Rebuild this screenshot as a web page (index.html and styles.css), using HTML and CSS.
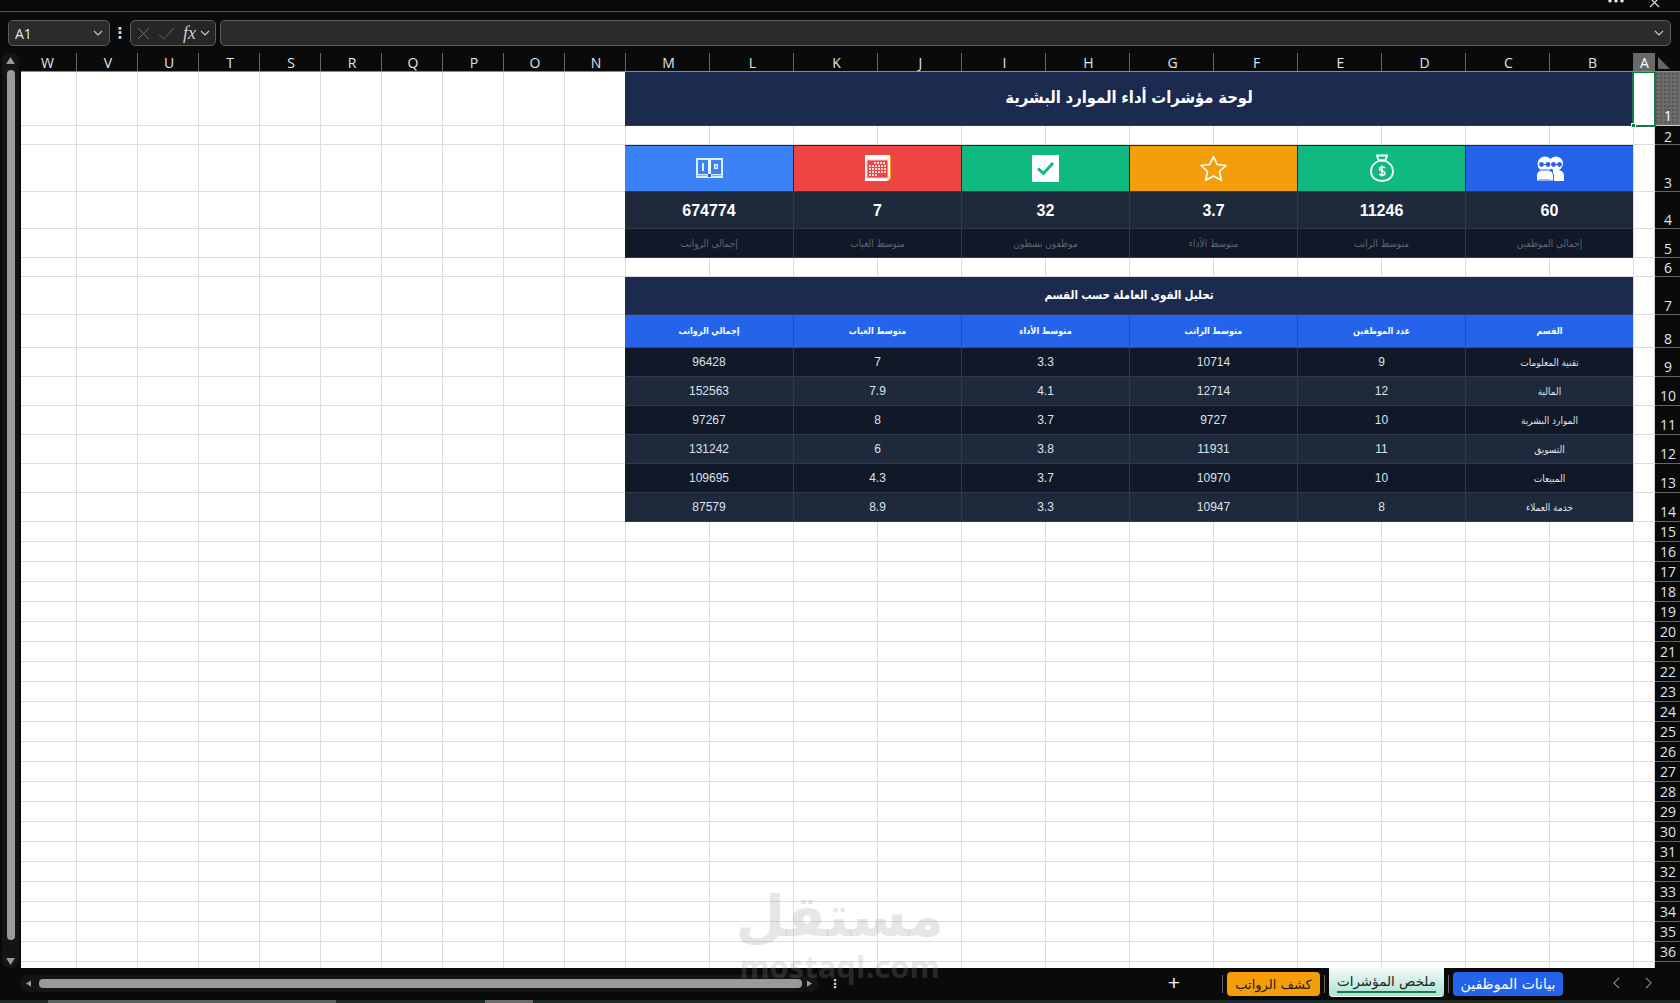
FILE: index.html
```html
<!DOCTYPE html>
<html lang="ar">
<head>
  <meta charset="UTF-8">
  <title>لوحة مؤشرات أداء الموارد البشرية</title>
  <link rel="stylesheet" href="styles.css">
</head>
<body>

  <div class="titlebar">
    <svg class="win-dots" viewBox="0 0 16 4"><circle cx="2" cy="1" r="1.6"/><circle cx="8" cy="1" r="1.6"/><circle cx="14" cy="1" r="1.6"/></svg>
    <svg class="win-close" viewBox="0 0 12 8"><path d="M1 -2L10 7M10 -2L1 7"/></svg>
  </div>

  <div class="formula-row">
    <div class="box name-box">
      <span>A1</span>
      <svg class="chev" viewBox="0 0 10 6"><path d="M1 1l4 4 4-4"/></svg>
    </div>
    <span class="vdots">⋮</span>
    <div class="box fx-box">
      <svg class="fx-x" viewBox="0 0 14 14"><path d="M1 1l12 12M13 1L1 13"/></svg>
      <svg class="fx-check" viewBox="0 0 18 14"><path d="M1 8l5 5L17 1"/></svg>
      <i class="fx-label">fx</i>
      <svg class="chev" viewBox="0 0 10 6"><path d="M1 1l4 4 4-4"/></svg>
    </div>
    <div class="box formula-input">
      <svg class="chev" viewBox="0 0 10 6"><path d="M1 1l4 4 4-4"/></svg>
    </div>
  </div>

  <div class="workarea">
    <div class="vscroll">
      <svg class="arrow" viewBox="0 0 10 8"><path d="M5 0l5 8H0z"/></svg>
      <div class="vthumb"></div>
      <svg class="arrow" viewBox="0 0 10 8"><path d="M0 0h10L5 8z"/></svg>
    </div>

    <div class="grid-wrap">
      <div class="col-head">
        <span class="c first">W</span><span class="c">V</span><span class="c">U</span><span class="c">T</span><span class="c">S</span><span class="c">R</span><span class="c">Q</span><span class="c">P</span><span class="c">O</span><span class="c">N</span>
        <span class="c wide">M</span><span class="c wide">L</span><span class="c wide">K</span><span class="c wide">J</span><span class="c wide">I</span><span class="c wide">H</span><span class="c wide">G</span><span class="c wide">F</span><span class="c wide">E</span><span class="c wide">D</span><span class="c wide">C</span><span class="c wide">B</span>
        <span class="c col-a">A</span>
        <span class="corner"><svg viewBox="0 0 12 12"><path d="M0 0l12 12H0z"/></svg></span>
      </div>

      <div class="sheet">
        <div class="row r1">
          <div class="cells main-title">لوحة مؤشرات أداء الموارد البشرية</div>
          <div class="a-cell active"><span class="handle"></span></div>
          <span class="rn selected">1</span>
        </div>
        <div class="row r2"><div class="cells"></div><div class="a-cell"></div><span class="rn">2</span></div>

        <div class="row r3">
          <div class="cells band icons" dir="rtl">
            <div class="cell blue">
              <svg class="ico" width="28" height="25" viewBox="0 0 28 25">
                <circle cx="20" cy="7.500" r="7" fill="#fff"/>
                <path fill="#fff" d="M17 14h5c3.500 0 6 2.500 6 6v5H17z"/>
                <circle cx="9" cy="8" r="7.500" fill="#fff"/>
                <path fill="#fff" stroke="#2563eb" d="M.5 25v-5c0-3.500 2.500-6 6-6h5c3.500 0 6 2.500 6 6v5z"/>
                <circle cx="5.500" cy="8.500" r="2.400" fill="#2563eb"/><circle cx="12" cy="8.500" r="2.400" fill="#2563eb"/>
                <circle cx="17.500" cy="8.500" r="2.400" fill="#2563eb"/><circle cx="23.500" cy="8.500" r="2.400" fill="#2563eb"/>
                <path stroke="#2563eb" d="M7 8.500h3.500M19 8.500h3"/>
                <path stroke="#9db9f2" d="M3 23.500h11"/>
              </svg>
            </div>
            <div class="cell green">
              <svg class="ico" width="24" height="28" viewBox="0 0 24 28" fill="none" stroke="#fff" stroke-width="1.800">
                <path d="M7 1.500h10l-1.500 5h-7z"/>
                <path d="M8 6.500h8"/>
                <path d="M8.500 7C4 9 1 13 1 17.500 1 23.500 6 27 12 27s11-3.500 11-9.500C23 13 20 9 15.500 7"/>
                <path stroke-width="1.500" d="M15 14c-.8-1.200-5.500-1.800-5.500.9 0 2.800 5.500 1.500 5.500 4.300 0 2.700-4.800 2.200-5.700.8M12 11.500v11"/>
              </svg>
            </div>
            <div class="cell amber">
              <svg class="ico" width="27" height="27" viewBox="0 0 27 27" fill="none" stroke="#fff" stroke-width="1.700" stroke-linejoin="round">
                <path d="M13.500 1.500l3.700 8 8.800 1-6.500 6 1.800 8.800-7.800-4.400-7.800 4.400 1.800-8.800-6.500-6 8.800-1z"/>
              </svg>
            </div>
            <div class="cell green">
              <svg class="ico" width="27" height="27" viewBox="0 0 27 27">
                <rect width="27" height="27" fill="#fff"/>
                <path fill="none" stroke="#10b981" stroke-width="3" d="M6 13.500l5.500 5L21 8"/>
              </svg>
            </div>
            <div class="cell red">
              <svg class="ico" width="26" height="26" viewBox="0 0 26 26">
                <path fill="#f59e0b" d="M2 1h24v23l-3 2H2z"/>
                <path fill="#fff" d="M0 0h25v23l-3 3H0z"/>
                <rect x="2" y="5" width="21" height="18" fill="#ef4444" stroke="#eac8dc"/>
                <g fill="none" stroke="#f9dcd4" stroke-width="2" stroke-dasharray="2 1">
                  <path d="M9 8h12"/>
                  <path d="M4 11h17"/>
                  <path d="M4 14h17"/>
                  <path d="M4 17h17"/>
                  <path d="M4 20h9"/>
                </g>
              </svg>
            </div>
            <div class="cell sky">
              <svg class="ico" width="27" height="20" viewBox="0 0 27 20">
                <rect width="27" height="20" fill="#d8f2fb"/>
                <rect x="2" y="2" width="10" height="14" fill="#3b82f6"/>
                <rect x="15" y="2" width="10" height="14" fill="#3b82f6"/>
                <rect x="12" y="2" width="3" height="14" fill="#eaf8fd"/>
                <rect x="12" y="16" width="3" height="3" fill="#2563eb"/>
                <rect x="6" y="5" width="2" height="8" fill="#e8f4ff"/>
                <rect x="18" y="6" width="4" height="5" fill="#e8f4ff"/>
                <rect x="19.500" y="7.500" width="1.500" height="2" fill="#3b82f6"/>
                <rect x="1" y="17" width="10" height="1" fill="#7fb2f0"/>
                <rect x="16" y="17" width="10" height="1" fill="#7fb2f0"/>
              </svg>
            </div>
          </div>
          <div class="a-cell"></div><span class="rn">3</span>
        </div>

        <div class="row r4">
          <div class="cells band values" dir="rtl">
            <div class="cell">60</div><div class="cell">11246</div><div class="cell">3.7</div><div class="cell">32</div><div class="cell">7</div><div class="cell">674774</div>
          </div>
          <div class="a-cell"></div><span class="rn">4</span>
        </div>

        <div class="row r5">
          <div class="cells band captions" dir="rtl">
            <div class="cell">إجمالي الموظفين</div><div class="cell">متوسط الراتب</div><div class="cell">متوسط الأداء</div><div class="cell">موظفون نشطون</div><div class="cell">متوسط الغياب</div><div class="cell">إجمالي الرواتب</div>
          </div>
          <div class="a-cell"></div><span class="rn">5</span>
        </div>

        <div class="row r6"><div class="cells"></div><div class="a-cell"></div><span class="rn">6</span></div>

        <div class="row r7">
          <div class="cells section-title">تحليل القوى العاملة حسب القسم</div>
          <div class="a-cell"></div><span class="rn">7</span>
        </div>

        <div class="row r8">
          <div class="cells band thead" dir="rtl">
            <div class="cell">القسم</div><div class="cell">عدد الموظفين</div><div class="cell">متوسط الراتب</div><div class="cell">متوسط الأداء</div><div class="cell">متوسط الغياب</div><div class="cell">إجمالي الرواتب</div>
          </div>
          <div class="a-cell"></div><span class="rn">8</span>
        </div>

        <div class="row rd">
          <div class="cells band tdata" dir="rtl">
            <div class="cell name">تقنية المعلومات</div><div class="cell">9</div><div class="cell">10714</div><div class="cell">3.3</div><div class="cell">7</div><div class="cell">96428</div>
          </div>
          <div class="a-cell"></div><span class="rn">9</span>
        </div>
        <div class="row rd">
          <div class="cells band tdata alt" dir="rtl">
            <div class="cell name">المالية</div><div class="cell">12</div><div class="cell">12714</div><div class="cell">4.1</div><div class="cell">7.9</div><div class="cell">152563</div>
          </div>
          <div class="a-cell"></div><span class="rn">10</span>
        </div>
        <div class="row rd">
          <div class="cells band tdata" dir="rtl">
            <div class="cell name">الموارد البشرية</div><div class="cell">10</div><div class="cell">9727</div><div class="cell">3.7</div><div class="cell">8</div><div class="cell">97267</div>
          </div>
          <div class="a-cell"></div><span class="rn">11</span>
        </div>
        <div class="row rd">
          <div class="cells band tdata alt" dir="rtl">
            <div class="cell name">التسويق</div><div class="cell">11</div><div class="cell">11931</div><div class="cell">3.8</div><div class="cell">6</div><div class="cell">131242</div>
          </div>
          <div class="a-cell"></div><span class="rn">12</span>
        </div>
        <div class="row rd">
          <div class="cells band tdata" dir="rtl">
            <div class="cell name">المبيعات</div><div class="cell">10</div><div class="cell">10970</div><div class="cell">3.7</div><div class="cell">4.3</div><div class="cell">109695</div>
          </div>
          <div class="a-cell"></div><span class="rn">13</span>
        </div>
        <div class="row rd">
          <div class="cells band tdata alt" dir="rtl">
            <div class="cell name">خدمة العملاء</div><div class="cell">8</div><div class="cell">10947</div><div class="cell">3.3</div><div class="cell">8.9</div><div class="cell">87579</div>
          </div>
          <div class="a-cell"></div><span class="rn">14</span>
        </div>

        <div class="row"><div class="cells"></div><div class="a-cell"></div><span class="rn">15</span></div>
        <div class="row"><div class="cells"></div><div class="a-cell"></div><span class="rn">16</span></div>
        <div class="row"><div class="cells"></div><div class="a-cell"></div><span class="rn">17</span></div>
        <div class="row"><div class="cells"></div><div class="a-cell"></div><span class="rn">18</span></div>
        <div class="row"><div class="cells"></div><div class="a-cell"></div><span class="rn">19</span></div>
        <div class="row"><div class="cells"></div><div class="a-cell"></div><span class="rn">20</span></div>
        <div class="row"><div class="cells"></div><div class="a-cell"></div><span class="rn">21</span></div>
        <div class="row"><div class="cells"></div><div class="a-cell"></div><span class="rn">22</span></div>
        <div class="row"><div class="cells"></div><div class="a-cell"></div><span class="rn">23</span></div>
        <div class="row"><div class="cells"></div><div class="a-cell"></div><span class="rn">24</span></div>
        <div class="row"><div class="cells"></div><div class="a-cell"></div><span class="rn">25</span></div>
        <div class="row"><div class="cells"></div><div class="a-cell"></div><span class="rn">26</span></div>
        <div class="row"><div class="cells"></div><div class="a-cell"></div><span class="rn">27</span></div>
        <div class="row"><div class="cells"></div><div class="a-cell"></div><span class="rn">28</span></div>
        <div class="row"><div class="cells"></div><div class="a-cell"></div><span class="rn">29</span></div>
        <div class="row"><div class="cells"></div><div class="a-cell"></div><span class="rn">30</span></div>
        <div class="row"><div class="cells"></div><div class="a-cell"></div><span class="rn">31</span></div>
        <div class="row"><div class="cells"></div><div class="a-cell"></div><span class="rn">32</span></div>
        <div class="row"><div class="cells"></div><div class="a-cell"></div><span class="rn">33</span></div>
        <div class="row"><div class="cells"></div><div class="a-cell"></div><span class="rn">34</span></div>
        <div class="row"><div class="cells"></div><div class="a-cell"></div><span class="rn">35</span></div>
        <div class="row"><div class="cells"></div><div class="a-cell"></div><span class="rn">36</span></div>
        <div class="row"><div class="cells"></div><div class="a-cell"></div><span class="rn"></span></div>
      </div>
    </div>
  </div>

  <div class="tabbar">
    <div class="hscroll">
      <svg class="arrow" viewBox="0 0 8 10"><path d="M8 0v10L0 5z"/></svg>
      <div class="hthumb"></div>
      <svg class="arrow" viewBox="0 0 8 10"><path d="M0 0v10l8-5z"/></svg>
    </div>
    <span class="vdots bar-dots">⋮</span>
    <span class="plus">+</span>
    <div class="tabs" dir="rtl">
      <span class="tab tab-blue">بيانات الموظفين</span>
      <span class="sep"></span>
      <span class="tab tab-active">ملخص المؤشرات</span>
      <span class="sep"></span>
      <span class="tab tab-orange">كشف الرواتب</span>
      <span class="sep"></span>
    </div>
    <div class="tab-nav">
      <svg viewBox="0 0 8 14"><path d="M7 1L1 7l6 6"/></svg>
      <svg viewBox="0 0 8 14"><path d="M1 1l6 6-6 6"/></svg>
    </div>
  </div>

  <div class="statusbar">
    <span class="status-dotted"></span>
    <span class="status-block"></span>
  </div>

  <div class="watermark">
    <div class="wm-ar">مستقل</div>
    <div class="wm-en">mostaql.com</div>
  </div>

</body>
</html>
```

FILE: styles.css
```css
* {
  box-sizing: border-box;
}
html, body {
  margin: 0;
  height: 100%;
}
body {
  position: relative;
  height: 1003px;
  overflow: hidden;
  background: #0a0a0a;
  color: #ddd;
  font-family: "Liberation Sans", "DejaVu Sans Condensed", "DejaVu Sans", sans-serif;
}

/* top of window */
.titlebar {
  position: relative;
  height: 12px;
  border-bottom: 1px solid #555;
}
.win-dots {
  position: absolute;
  right: 56px;
  top: 0;
  width: 16px;
  height: 4px;
  fill: #eee;
}
.win-close {
  position: absolute;
  right: 19px;
  top: 0;
  width: 12px;
  height: 8px;
  fill: none;
  stroke: #ddd;
  stroke-width: 1.2;
}

/* name box + formula bar */
.formula-row {
  display: flex;
  align-items: center;
  height: 41px;
  padding: 8px 9px 7px 8px;
}
.box {
  display: flex;
  align-items: center;
  height: 26px;
  background: #2b2b2b;
  border: 1px solid #5c5c5c;
  border-radius: 5px;
}
.chev {
  width: 10px;
  height: 6px;
  fill: none;
  stroke: #c8c8c8;
  stroke-width: 1.2;
}
.name-box {
  width: 102px;
  padding: 0 6px;
  justify-content: space-between;
  font: 14px "Open Sans", sans-serif;
  color: #e8e8e8;
}
.vdots {
  width: 20px;
  text-align: center;
  font: bold 15px "DejaVu Sans", sans-serif;
  color: #ddd;
}
.fx-box {
  width: 86px;
  padding: 0 2px 0 6px;
  background: #262626;
}
.fx-x {
  width: 13px;
  height: 13px;
  fill: none;
  stroke: #777;
}
.fx-check {
  width: 17px;
  height: 13px;
  margin-left: 8px;
  fill: none;
  stroke: #6b6b6b;
}
.fx-label {
  margin-left: 8px;
  margin-right: 4px;
  font: italic 18px "Liberation Serif", serif;
  color: #ccc;
}
.formula-input {
  flex: 1;
  margin-left: 4px;
  padding-right: 6px;
  justify-content: flex-end;
}

/* sheet */
.workarea {
  display: flex;
  height: 915px;
}
.vscroll {
  width: 17px;
  margin: 0 2px;
  padding-top: 4px;
  display: flex;
  flex-direction: column;
  align-items: center;
  background: #141414;
  border-radius: 8px;
}
.vscroll .arrow {
  width: 9px;
  height: 7px;
  flex: none;
  fill: #999;
}
.vthumb {
  width: 8px;
  height: 870px;
  margin: 6px 0 18px;
  flex: none;
  background: #9a9a9a;
  border-radius: 4px;
}
.grid-wrap {
  flex: 1;
  min-width: 0;
}
.col-head {
  display: flex;
  height: 19px;
  padding-left: 1px;
  border-bottom: 1px solid #8a8a8a;
}
.c {
  width: 61px;
  font: 14px/20px "Open Sans", sans-serif;
  text-align: center;
  text-indent: 2px;
  color: #dfe6ee;
  border-right: 1px solid #666;
}
.c.first {
  width: 55px;
  text-indent: -3px;
}
.c.wide {
  width: 84px;
}
.c.col-a {
  width: 21px;
  text-indent: 0;
  background: #6a6a6a;
  color: #fff;
  border-right: 0;
}
.corner {
  width: 25px;
  padding: 4px 0 0 3px;
}
.corner svg {
  display: block;
  width: 12px;
  height: 12px;
  fill: #666;
}

.sheet {
  height: 896px;
  overflow: hidden;
  background-color: #fff;
  background-image:
    repeating-linear-gradient(to right, transparent 0 60px, #dcdcdc 60px 61px),
    repeating-linear-gradient(to right, transparent 0 83px, #dcdcdc 83px 84px);
  background-size: 610px 100%, 1008px 100%;
  background-position: -5px 0, 605px 0;
  background-repeat: no-repeat;
}
.row {
  display: flex;
  height: 20px;
  padding-left: 604px;
  border-bottom: 1px solid #dcdcdc;
}
.r1 { height: 54px; }
.r2 { height: 19px; }
.r3 { height: 47px; }
.r4 { height: 37px; }
.r5 { height: 29px; }
.r6 { height: 19px; }
.r7 { height: 38px; }
.r8 { height: 33px; }
.rd { height: 29px; }

.cells {
  width: 1008px;
  flex: none;
}
.a-cell {
  position: relative;
  width: 22px;
  flex: none;
  border-right: 1px solid #cfcfcf;
}
.active {
  z-index: 2;
  height: 56px;
  margin: -1px -1px -1px -1px;
  width: 24px;
  border: 2px solid #107c41;
}
.handle {
  position: absolute;
  left: -3px;
  bottom: -3px;
  width: 5px;
  height: 5px;
  background: #107c41;
  border: 1px solid #fff;
}
.rn {
  width: 25px;
  flex: none;
  margin-bottom: -1px;
  padding: 0 0 1px 1px;
  display: flex;
  align-items: flex-end;
  justify-content: center;
  background: #0a0a0a;
  border-bottom: 1px solid #666;
  font: 14px/16px "Open Sans", sans-serif;
  color: #dfe6ee;
}
.r2 .rn, .r3 .rn, .r4 .rn, .r5 .rn, .r7 .rn, .r8 .rn {
  padding-bottom: 0;
}
.r2 .rn, .r6 .rn {
  line-height: 14px;
}
.rn.selected {
  background-color: #6a6a6a;
  background-image: radial-gradient(#565656 1px, transparent 1px);
  background-size: 4px 4px;
  color: #fff;
  border-bottom-color: #ccc;
}

/* dashboard */
.main-title, .section-title {
  display: flex;
  align-items: center;
  justify-content: center;
  margin-bottom: -1px;
  background: #1b2a4e;
  color: #fff;
  font-weight: bold;
  direction: rtl;
  border-bottom: 1px solid #2c3a57;
}
.main-title {
  font-size: 16.5px;
  padding-bottom: 3px;
}
.section-title {
  font-size: 11.5px;
  padding-bottom: 2px;
}
.band {
  display: grid;
  grid-template-columns: repeat(6, 168px);
  margin-bottom: -1px;
}
.cell {
  display: flex;
  align-items: center;
  justify-content: center;
  border-left: 1px solid #2f3a4e;
  border-bottom: 1px solid #2f3a4e;
}
.cell:last-child {
  border-left: 0;
}
.icons {
  border-top: 1px solid #1e293b;
}
.icons .cell {
  border-left-color: #1e293b;
  padding-bottom: 1px;
}
.ico {
  display: block;
}
.blue { background: #2563eb; }
.green { background: #10b981; }
.amber { background: #f59e0b; }
.red { background: #ef4444; }
.sky { background: #3b82f6; }
.values .cell {
  background: #1e293b;
  color: #fff;
  font-size: 16px;
  font-weight: bold;
  padding-top: 2px;
}
.captions .cell {
  background: #111827;
  color: #5d6778;
  font-size: 10px;
}
.thead .cell {
  background: #2563eb;
  color: #fff;
  font-size: 9px;
  font-weight: bold;
  border-left-color: #3f4d66;
  border-bottom-color: #3f4d66;
}
.tdata .cell {
  background: #111827;
  color: #dbe3ec;
  font-size: 12px;
}
.tdata.alt .cell {
  background: #1e293b;
}
.tdata .name {
  font-size: 10px;
}

/* sheet tabs */
.tabbar {
  position: relative;
  display: flex;
  align-items: center;
  height: 32px;
  background: #0a0a0a;
}
.hscroll {
  display: flex;
  align-items: center;
  gap: 3px;
  width: 798px;
  height: 17px;
  margin: -1px 0 0 20px;
  padding: 0 6px;
  background: #141414;
  border-radius: 8px;
}
.hscroll .arrow {
  width: 5px;
  height: 9px;
  fill: #9a9a9a;
  flex: none;
}
.hthumb {
  flex: 1;
  height: 9px;
  margin: 0 2px 0 5px;
  background: #9a9a9a;
  border-radius: 4px;
}
.bar-dots {
  width: 14px;
  margin: 0 0 0 10px;
  font-size: 12px;
}
.plus {
  width: 20px;
  margin: -3px 0 0 322px;
  text-align: center;
  font: 21px/24px "Liberation Sans", sans-serif;
  color: #eee;
}
.tabs {
  display: flex;
  align-items: flex-start;
  position: absolute;
  right: 117px;
  top: 0;
  height: 30px;
  font: 14px/25px "DejaVu Sans", sans-serif;
}
.tab {
  display: block;
  height: 24px;
  margin-top: 4px;
  text-align: center;
  border-radius: 4px;
}
.tab-blue {
  width: 110px;
  background: #2563eb;
  color: #fff;
}
.tab-orange {
  width: 93px;
  background: #f59e0b;
  color: #1c1c1c;
  font-size: 13px;
}
.tab-active {
  position: relative;
  width: 115px;
  height: 29px;
  margin-top: 0;
  border-radius: 0 0 4px 4px;
  border-bottom: 1px solid #fff;
  line-height: 26px;
  font-size: 13.5px;
  color: #222;
  background: linear-gradient(#f4fbf9, #a9e2d2);
}
.tab-active::after {
  content: "";
  position: absolute;
  left: 8px;
  right: 8px;
  bottom: 3px;
  height: 2px;
  background: #107c41;
}
.sep {
  width: 1px;
  height: 18px;
  margin: 7px 4px 0;
  background: #666;
}
.tab-nav {
  position: absolute;
  right: 28px;
  top: 9px;
  display: flex;
  gap: 25px;
}
.tab-nav svg {
  width: 7px;
  height: 12px;
  fill: none;
  stroke: #999;
  stroke-width: 1.2;
}

.statusbar {
  display: flex;
  height: 3px;
  background: #1c2a2a;
}
.status-dotted {
  width: 288px;
  margin-left: 48px;
  background: #5a5f5f;
}
.status-block {
  width: 48px;
  margin-left: 149px;
  background: #6c6c6c;
}

/* site stamp over the picture */
.watermark {
  position: absolute;
  left: 739px;
  top: 880px;
  width: 201px;
  color: rgba(150, 150, 150, 0.24);
  text-align: center;
  pointer-events: none;
}
.wm-ar {
  margin: 0 -4px 0 4px;
  font: bold 57px/72px "DejaVu Sans", sans-serif;
  direction: rtl;
}
.wm-en {
  font: bold 31px/28px "Open Sans", sans-serif;
}
```
